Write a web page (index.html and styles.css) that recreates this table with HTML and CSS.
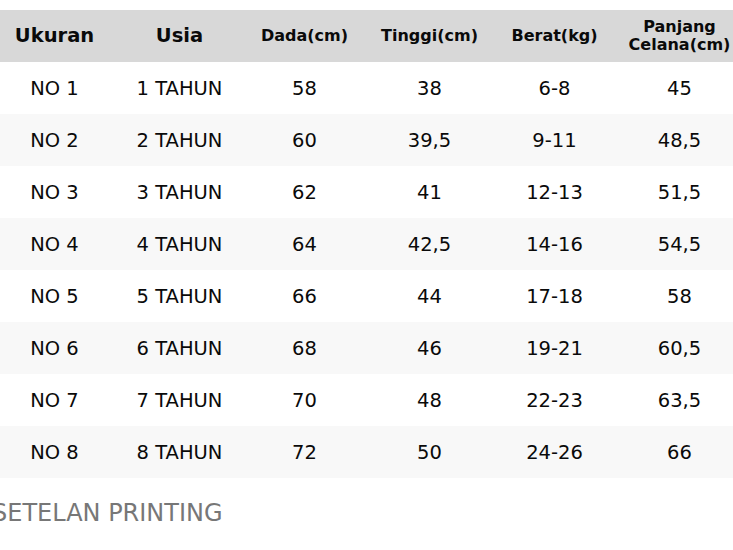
FILE: index.html
```html
<!DOCTYPE html>
<html lang="id">
<head>
<meta charset="utf-8">
<title>Ukuran</title>
<link rel="stylesheet" href="styles.css">
</head>
<body>
<div class="page">
  <table class="size-table">
    <thead>
      <tr>
        <th class="big">Ukuran</th>
        <th class="big">Usia</th>
        <th>Dada(cm)</th>
        <th>Tinggi(cm)</th>
        <th>Berat(kg)</th>
        <th>Panjang<br>Celana(cm)</th>
      </tr>
    </thead>
    <tbody>
      <tr><td>NO 1</td><td>1 TAHUN</td><td>58</td><td>38</td><td>6-8</td><td>45</td></tr>
      <tr><td>NO 2</td><td>2 TAHUN</td><td>60</td><td>39,5</td><td>9-11</td><td>48,5</td></tr>
      <tr><td>NO 3</td><td>3 TAHUN</td><td>62</td><td>41</td><td>12-13</td><td>51,5</td></tr>
      <tr><td>NO 4</td><td>4 TAHUN</td><td>64</td><td>42,5</td><td>14-16</td><td>54,5</td></tr>
      <tr><td>NO 5</td><td>5 TAHUN</td><td>66</td><td>44</td><td>17-18</td><td>58</td></tr>
      <tr><td>NO 6</td><td>6 TAHUN</td><td>68</td><td>46</td><td>19-21</td><td>60,5</td></tr>
      <tr><td>NO 7</td><td>7 TAHUN</td><td>70</td><td>48</td><td>22-23</td><td>63,5</td></tr>
      <tr><td>NO 8</td><td>8 TAHUN</td><td>72</td><td>50</td><td>24-26</td><td>66</td></tr>
    </tbody>
  </table>
  <p class="caption">SETELAN PRINTING</p>
</div>
</body>
</html>
```

FILE: styles.css
```css
html, body {
  margin: 0;
  padding: 0;
  background: #ffffff;
  overflow: hidden;
}

body {
  font-family: "DejaVu Sans", "Liberation Sans", sans-serif;
  color: #0a0a0a;
}

.page {
  padding-top: 10px;
  margin-left: -8px;
  width: 760px;
}

.size-table {
  width: 750px;
  table-layout: fixed;
  border-collapse: collapse;
  border-spacing: 0;
}

.size-table th,
.size-table td {
  width: 125px;
  height: 52px;
  padding: 0;
  text-align: center;
  vertical-align: middle;
}

.size-table th {
  background: #d8d8d8;
  font-weight: bold;
  font-size: 16px;
  line-height: 1.1;
  color: #0a0a0a;
}

.size-table th.big {
  font-size: 19.5px;
}

.size-table td {
  font-size: 19.5px;
}

.size-table tbody tr:nth-child(even) td {
  background: #f8f8f8;
}

.caption {
  margin: 21px 0 0 0;
  font-size: 24px;
  line-height: 28px;
  color: #777777;
}
```
